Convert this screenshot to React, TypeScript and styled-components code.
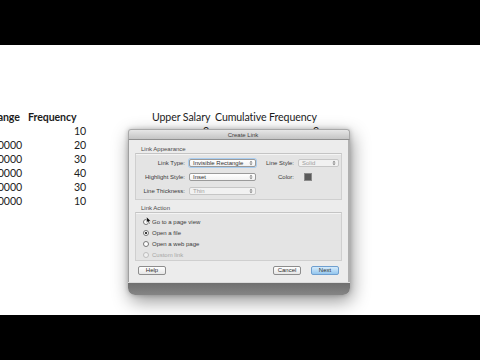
import React from "react";
import styled, { createGlobalStyle } from "styled-components";

const Global = createGlobalStyle`
  html, body { margin: 0; padding: 0; background: #000; }
  body { width: 480px; height: 360px; overflow: hidden; }
`;

const Frame = styled.div`
  width: 480px;
  height: 360px;
  display: flex;
  flex-direction: column;
  background: #000;
`;

const Letterbox = styled.div`
  flex: none;
  height: 45px;
  background: #000;
`;

const Stage = styled.div`
  position: relative;
  flex: none;
  height: 270px;
  background: #fff;
  overflow: hidden;
`;

const Sheet = styled.div`
  display: grid;
  grid-template-columns: 34px 64px 60px 63px 110px;
  grid-auto-rows: 14px;
  margin-left: -9px;
  padding-top: 65px;
  font-family: Lato, "Open Sans", sans-serif;
  font-size: 10.6px;
  letter-spacing: -0.1px;
  color: #1c1c1c;
`;

const Cell = styled.div<{ $right?: boolean; $bold?: boolean; $indent?: number }>`
  line-height: 14px;
  white-space: nowrap;
  padding: 0 3px;
  text-indent: ${(p) => p.$indent ?? 0}px;
  text-align: ${(p) => (p.$right ? "right" : "left")};
  font-weight: ${(p) => (p.$bold ? 700 : 400)};
  direction: ${(p) => (p.$right ? "rtl" : "ltr")};
  overflow: visible;
`;

const Dialog = styled.div`
  position: absolute;
  left: 128px;
  top: 84px;
  width: 222px;
  display: flex;
  flex-direction: column;
  border-radius: 3px 3px 7px 7px;
  box-shadow: 2px 6px 18px rgba(0, 0, 0, 0.42), 0 0 5px rgba(0, 0, 0, 0.22);
  font-family: "Liberation Sans", Arial, sans-serif;
  font-size: 6px;
  color: #3a3a3a;
`;

const TitleBar = styled.div`
  height: 11px;
  line-height: 10px;
  text-align: center;
  padding-left: 8px;
  color: #3c3c3c;
  background: linear-gradient(#e6e6e6, #c4c4c4);
  border: 1px solid #a8a8a8;
  border-bottom-color: #8f8f8f;
  border-radius: 3px 3px 0 0;
  box-sizing: border-box;
`;

const Body = styled.div`
  background: #ececec;
  border-left: 1px solid #a0a0a0;
  border-right: 2px solid #b0b0b0;
  padding: 5px 6px 7px;
  display: flex;
  flex-direction: column;
`;

const GroupLabel = styled.div<{ $gapTop?: number }>`
  height: 8px;
  line-height: 8px;
  padding-left: 6px;
  margin-top: ${(p) => p.$gapTop ?? 0}px;
  color: #4a4a4a;
`;

const Panel = styled.div`
  background: #e4e4e4;
  border: 1px solid #cfcfcf;
  border-top-color: #c4c4c4;
  box-shadow: inset 0 1px 0 #f4f4f4;
`;

const AppearanceGrid = styled(Panel)`
  display: grid;
  grid-template-columns: 46px 67px 34px 41px;
  grid-auto-rows: 9px;
  column-gap: 4px;
  row-gap: 5px;
  align-items: center;
  padding: 4px 4px 4px 3px;
`;

const FieldLabel = styled.div`
  text-align: right;
  white-space: nowrap;
  color: #3a3a3a;
`;

const Select = styled.div<{ $disabled?: boolean; $focus?: boolean }>`
  height: 8px;
  box-sizing: border-box;
  display: flex;
  align-items: center;
  justify-content: space-between;
  padding: 0 2px 0 3px;
  border: 1px solid ${(p) => (p.$disabled ? "#c6c6c6" : "#9a9a9a")};
  border-radius: 2px;
  background: ${(p) => (p.$disabled ? "#f1f1f1" : "linear-gradient(#ffffff, #f2f2f2)")};
  color: ${(p) => (p.$disabled ? "#a0a0a0" : "#333")};
  box-shadow: ${(p) => (p.$focus ? "0 0 0 1px #a9cdf0" : "none")};
  white-space: nowrap;
`;

const Swatch = styled.div`
  width: 6px;
  height: 6px;
  margin-left: 6px;
  background: #5a5a5a;
  border: 1px solid #8a8a8a;
`;

const ActionPanel = styled(Panel)`
  display: flex;
  flex-direction: column;
  padding: 3px 6px 0 7px;
`;

const RadioRow = styled.div<{ $disabled?: boolean }>`
  height: 11px;
  display: flex;
  align-items: center;
  gap: 3px;
  color: ${(p) => (p.$disabled ? "#a6a6a6" : "#3a3a3a")};
`;

const RadioDot = styled.span<{ $checked?: boolean; $disabled?: boolean }>`
  width: 6px;
  height: 6px;
  box-sizing: border-box;
  border-radius: 50%;
  border: 1px solid ${(p) => (p.$disabled ? "#bdbdbd" : "#777")};
  background: ${(p) =>
    p.$checked
      ? "radial-gradient(circle, #3d3d3d 0 1.2px, #fff 1.4px)"
      : p.$disabled
      ? "#f0f0f0"
      : "#fff"};
  flex: none;
`;

const Footer = styled.div`
  display: flex;
  justify-content: space-between;
  margin-top: 5px;
  padding: 0 3px;
`;

const ButtonGroup = styled.div`
  display: flex;
  gap: 10px;
`;

const Button = styled.div<{ $primary?: boolean }>`
  width: 28px;
  height: 9px;
  box-sizing: border-box;
  line-height: 7px;
  text-align: center;
  border: 1px solid ${(p) => (p.$primary ? "#6f9fcf" : "#8d8d8d")};
  border-radius: 2px;
  background: ${(p) =>
    p.$primary ? "linear-gradient(#d6ebfb, #93c6ee)" : "linear-gradient(#ffffff, #e6e6e6)"};
  color: #2e2e2e;
`;

const SheetEdge = styled.div`
  height: 12px;
  background: linear-gradient(#6f6f6f, #858585);
  border-radius: 0 0 7px 7px;
  border-top: 1px solid #dcdcdc;
`;

const Cursor = styled.svg`
  position: absolute;
  left: 146px;
  top: 171px;
`;

function Arrows() {
  return (
    <svg width="4" height="6" viewBox="0 0 4 6">
      <path d="M0.5 2.5 L2 0.8 L3.5 2.5 Z M0.5 3.5 L2 5.2 L3.5 3.5 Z" fill="#7a7a7a" />
    </svg>
  );
}

const sheetRows: string[][] = [
  ["", "10", "", "0", "0"],
  ["10001-20000", "20", "", "", ""],
  ["20001-30000", "30", "", "", ""],
  ["30001-40000", "40", "", "", ""],
  ["40001-50000", "30", "", "", ""],
  ["50001-60000", "10", "", "", ""],
];

export default function App() {
  return (
    <>
      <Global />
      <Frame>
        <Letterbox />
        <Stage>
          <Sheet>
            <Cell $bold $indent={-3}>Range</Cell>
            <Cell $bold>Frequency</Cell>
            <Cell />
            <Cell>Upper Salary</Cell>
            <Cell>Cumulative Frequency</Cell>
            {sheetRows.map((r, i) =>
              r.map((v, j) => (
                <Cell key={`${i}-${j}`} $right>
                  {v}
                </Cell>
              ))
            )}
          </Sheet>

          <Dialog>
            <TitleBar>Create Link</TitleBar>
            <Body>
              <GroupLabel>Link Appearance</GroupLabel>
              <AppearanceGrid>
                <FieldLabel>Link Type:</FieldLabel>
                <Select $focus>
                  Invisible Rectangle <Arrows />
                </Select>
                <FieldLabel>Line Style:</FieldLabel>
                <Select $disabled>
                  Solid <Arrows />
                </Select>

                <FieldLabel>Highlight Style:</FieldLabel>
                <Select>
                  Inset <Arrows />
                </Select>
                <FieldLabel>Color:</FieldLabel>
                <Swatch />

                <FieldLabel>Line Thickness:</FieldLabel>
                <Select $disabled>
                  Thin <Arrows />
                </Select>
              </AppearanceGrid>

              <GroupLabel $gapTop={4}>Link Action</GroupLabel>
              <ActionPanel>
                <RadioRow>
                  <RadioDot />
                  Go to a page view
                </RadioRow>
                <RadioRow>
                  <RadioDot $checked />
                  Open a file
                </RadioRow>
                <RadioRow>
                  <RadioDot />
                  Open a web page
                </RadioRow>
                <RadioRow $disabled>
                  <RadioDot $disabled />
                  Custom link
                </RadioRow>
              </ActionPanel>

              <Footer>
                <Button>Help</Button>
                <ButtonGroup>
                  <Button>Cancel</Button>
                  <Button $primary>Next</Button>
                </ButtonGroup>
              </Footer>
            </Body>
            <SheetEdge />
          </Dialog>

          <Cursor width="6" height="9" viewBox="0 0 7 10">
            <path d="M0.5 0.5 L0.5 8 L2.3 6.3 L3.6 9.2 L4.8 8.7 L3.6 5.9 L6 5.9 Z" fill="#111" stroke="#fff" strokeWidth="0.7" />
          </Cursor>
        </Stage>
        <Letterbox />
      </Frame>
    </>
  );
}
